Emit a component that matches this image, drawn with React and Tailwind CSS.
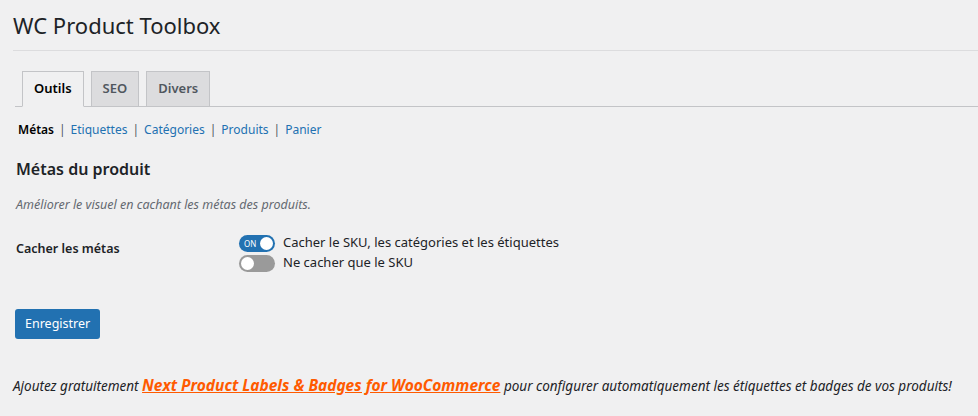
import React, { useState } from 'react';

const font = { fontFamily: '"Segoe UI", "Noto Sans", "Open Sans", sans-serif' };

function Toggle({ on, onClick }) {
  return (
    <button
      onClick={onClick}
      className={`relative w-[36px] h-[17px] rounded-full shrink-0 ${on ? 'bg-[#2271b1]' : 'bg-[#9a9a9a]'}`}
    >
      {on && <span className="absolute left-[5px] top-[3px] text-[8px] leading-[11px] text-white">ON</span>}
      <span className={`absolute top-[2px] w-[13px] h-[13px] rounded-full bg-white ${on ? 'right-[2px]' : 'left-[2px]'}`} />
    </button>
  );
}

export default function App() {
  const [tab, setTab] = useState('Outils');
  const [opts, setOpts] = useState({ all: true, sku: false });

  const tabs = ['Outils', 'SEO', 'Divers'];
  const links = ['Etiquettes', 'Catégories', 'Produits', 'Panier'];

  return (
    <div className="min-h-screen bg-[#f0f0f1] text-[#3c434a]" style={font}>
      {/* Page title */}
      <div className="pl-[13px]">
        <h1 className="h-[51px] flex items-center text-[22px] text-[#1d2327] border-b border-[#dcdcde]">
          WC Product Toolbox
        </h1>
      </div>

      {/* Tabs */}
      <div className="ml-[15px] mt-[20px] flex items-end border-b border-[#c3c4c7] h-[36px]">
        {tabs.map(t => (
          <button
            key={t}
            onClick={() => setTab(t)}
            className={`ml-[7px] h-[36px] px-[11px] border border-[#c3c4c7] text-[13px] font-semibold -mb-px ${
              tab === t ? 'bg-[#f0f0f1] border-b-[#f0f0f1] text-black' : 'bg-[#dcdcde] text-[#50575e]'
            }`}
          >
            {t}
          </button>
        ))}
      </div>

      {/* Sub links */}
      <div className="ml-[18px] mt-[13px] h-[20px] flex items-center text-[12px]">
        <span className="font-semibold text-black">Métas</span>
        {links.map(l => (
          <span key={l} className="flex items-center">
            <span className="text-[#50575e] px-[5px]">|</span>
            <a href="#" className="text-[#2271b1]">{l}</a>
          </span>
        ))}
      </div>

      {/* Section */}
      <div className="ml-[16px]">
        <h2 className="mt-[17px] h-[24px] flex items-center text-[16px] font-semibold text-[#1d2327]">Métas du produit</h2>
        <p className="mt-[15px] h-[18px] flex items-center text-[12.5px] italic text-[#646970]">
          Améliorer le visuel en cachant les métas des produits.
        </p>

        <div className="mt-[20px] flex">
          <div className="w-[223px] pt-[6px] text-[12.5px] font-semibold text-[#1d2327]">Cacher les métas</div>
          <div className="flex flex-col gap-[2px] text-[13px] text-[#1d2327]">
            <label className="flex items-center gap-[8px] h-[18px]">
              <Toggle on={opts.all} onClick={() => setOpts({ ...opts, all: !opts.all })} />
              Cacher le SKU, les catégories et les étiquettes
            </label>
            <label className="flex items-center gap-[8px] h-[18px]">
              <Toggle on={opts.sku} onClick={() => setOpts({ ...opts, sku: !opts.sku })} />
              Ne cacher que le SKU
            </label>
          </div>
        </div>
      </div>

      <div className="ml-[15px] mt-[37px]">
        <button className="h-[30px] px-[10px] rounded-[3px] bg-[#2271b1] text-white text-[12.5px]">Enregistrer</button>
      </div>

      {/* Footer promo */}
      <p className="ml-[13px] mt-[35px] whitespace-nowrap text-[13.5px] italic text-[#1d2327]">
        Ajoutez gratuitement{' '}
        <a href="#" className="font-bold underline text-[#ff5a00] text-[15.5px]">Next Product Labels &amp; Badges for WooCommerce</a>{' '}
        pour configurer automatiquement les étiquettes et badges de vos produits!
      </p>
    </div>
  );
}
